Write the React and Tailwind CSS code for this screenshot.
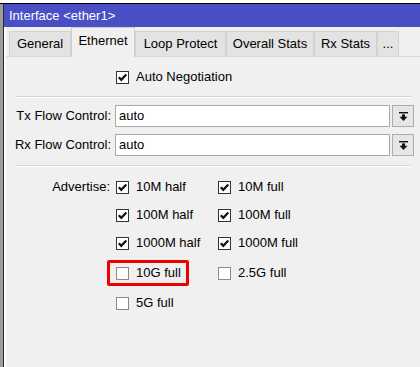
import React from 'react';

const Check = ({ checked }) => (
  <div
    className={`w-[13px] h-[13px] shrink-0 bg-white border flex items-center justify-center ${
      checked ? 'border-[#333333]' : 'border-[#8a8a8a]'
    }`}
  >
    {checked && (
      <svg width="11" height="11" viewBox="0 0 11 11">
        <path d="M1.8 5.2 L4.3 7.8 L9.3 2.6" fill="none" stroke="#111" strokeWidth="2.2" />
      </svg>
    )}
  </div>
);

const Option = ({ checked, label }) => (
  <div className="flex items-center gap-[7px]">
    <Check checked={checked} />
    <span>{label}</span>
  </div>
);

const Separator = ({ className }) => (
  <div className={`ml-[9px] w-[396px] border-t border-[#d4d4d4] border-b border-b-white ${className}`} />
);

const Combo = ({ label, value, className }) => (
  <div className={`flex items-center ${className}`}>
    <div className="w-[106px] text-right pr-px">{label}</div>
    <div className="ml-[3px] w-[275px] h-[22px] bg-white border border-[#a9a9a9] flex items-center pl-[3px]">
      {value}
    </div>
    <div className="ml-[2px] w-[22px] h-[22px] bg-[#e6e6e6] border border-[#adadad] flex items-center justify-center">
      <svg width="9" height="9" viewBox="0 0 9 9">
        <rect x="0" y="0" width="9" height="1.4" fill="#111" />
        <rect x="3" y="2.4" width="3" height="2.6" fill="#111" />
        <path d="M0.5 4.8 L8.5 4.8 L4.5 9 Z" fill="#111" />
      </svg>
    </div>
  </div>
);

const tabs = [
  { name: 'General', w: 'w-[62px]' },
  { name: 'Ethernet', w: 'w-[64px]', active: true },
  { name: 'Loop Protect', w: 'w-[91px]' },
  { name: 'Overall Stats', w: 'w-[88px]' },
  { name: 'Rx Stats', w: 'w-[63px]' },
  { name: '...', w: 'w-[22px]' },
];

const advertise = [
  [{ label: '10M half', checked: true }, { label: '10M full', checked: true }],
  [{ label: '100M half', checked: true }, { label: '100M full', checked: true }],
  [{ label: '1000M half', checked: true }, { label: '1000M full', checked: true }],
  [{ label: '10G full', checked: false, marked: true }, { label: '2.5G full', checked: false }],
  [{ label: '5G full', checked: false }],
];

export default function App() {
  return (
    <div className="w-[420px] h-[367px] overflow-hidden bg-[#f0f0f0] flex flex-col text-[13px] text-black font-['Liberation_Sans',Arial,sans-serif]">
      <div className="h-[4px] shrink-0 bg-white border-b border-black" />
      <div className="flex flex-1">
        <div className="w-[3px] bg-[#9c9c9c]" />
        <div className="w-px bg-[#2a2a2a]" />
        <div className="flex-1 flex flex-col">
          <div className="h-[23px] shrink-0 bg-[#4a4fc6] text-white pl-[5px] flex items-center">
            Interface &lt;ether1&gt;
          </div>
          <div className="flex-1 border-l-2 border-white flex flex-col">
            {/* tabs */}
            <div className="flex items-end pl-[3px] h-[30px] border-b border-[#dadada]">
              {tabs.map((t) =>
                t.active ? (
                  <div
                    key={t.name}
                    className={`${t.w} h-[30px] -mb-px bg-[#f0f0f0] border border-b-0 border-[#cfcfcf] flex items-center justify-center pb-[3px]`}
                  >
                    {t.name}
                  </div>
                ) : (
                  <div
                    key={t.name}
                    className={`${t.w} h-[25px] bg-[#e3e3e3] border border-b-0 border-[#d2d2d2] flex items-center justify-center`}
                  >
                    {t.name}
                  </div>
                )
              )}
            </div>

            {/* auto negotiation */}
            <div className="flex items-center h-[28px] mt-[6px]">
              <div className="w-[106px]" />
              <div className="ml-[4px]">
                <Option checked label="Auto Negotiation" />
              </div>
            </div>

            <Separator className="mt-[5px]" />

            <Combo label="Tx Flow Control:" value="auto" className="mt-[7px]" />
            <Combo label="Rx Flow Control:" value="auto" className="mt-[7px]" />

            <Separator className="mt-[9px]" />

            <div className="mt-[6px] flex flex-col">
              {advertise.map((row, i) => (
                <div key={i} className={`flex items-center h-[28px] ${i >= 3 ? 'mt-[2px]' : ''}`}>
                  <div className="w-[106px] text-right pr-[2px]">{i === 0 ? 'Advertise:' : ''}</div>
                  <div className="ml-[4px] w-[102px] relative flex items-center h-full">
                    <Option checked={row[0].checked} label={row[0].label} />
                    {row[0].marked && (
                      <div className="absolute left-[-9px] top-[1px] w-[82px] h-[26px] border-[3px] border-[#ee0000] rounded-[2px]" />
                    )}
                  </div>
                  {row[1] && <Option checked={row[1].checked} label={row[1].label} />}
                </div>
              ))}
            </div>
          </div>
        </div>
      </div>
    </div>
  );
}
